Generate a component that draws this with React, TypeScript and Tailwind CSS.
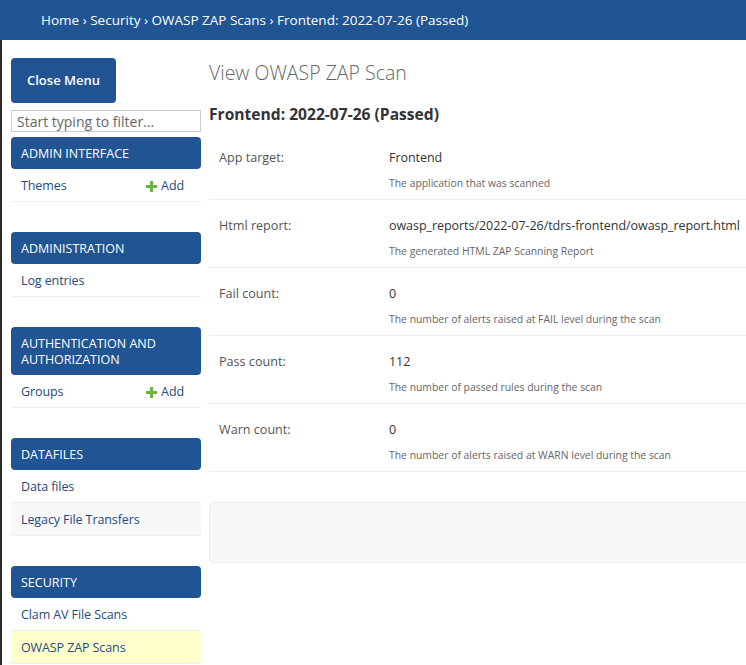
import React from "react";

const F = { fontFamily: '"Open Sans", "Noto Sans", Arial, sans-serif' };

function Plus() {
  return (
    <svg width="11" height="11" viewBox="0 0 11 11" className="mr-[4px]">
      <rect x="4" y="0" width="3" height="11" fill="#6cb33f" />
      <rect x="0" y="4" width="11" height="3" fill="#6cb33f" />
    </svg>
  );
}

type Item = { name: string; add?: boolean; bg?: string };
type Mod = { title: string[]; items: Item[] };

const modules: Mod[] = [
  { title: ["ADMIN INTERFACE"], items: [{ name: "Themes", add: true }] },
  { title: ["ADMINISTRATION"], items: [{ name: "Log entries" }] },
  { title: ["AUTHENTICATION AND", "AUTHORIZATION"], items: [{ name: "Groups", add: true }] },
  {
    title: ["DATAFILES"],
    items: [{ name: "Data files" }, { name: "Legacy File Transfers", bg: "bg-[#f8f8f8]" }],
  },
  {
    title: ["SECURITY"],
    items: [{ name: "Clam AV File Scans" }, { name: "OWASP ZAP Scans", bg: "bg-[#ffffcc]" }],
  },
];

const fields = [
  { label: "App target:", value: "Frontend", help: "The application that was scanned" },
  {
    label: "Html report:",
    value: "owasp_reports/2022-07-26/tdrs-frontend/owasp_report.html",
    help: "The generated HTML ZAP Scanning Report",
  },
  { label: "Fail count:", value: "0", help: "The number of alerts raised at FAIL level during the scan" },
  { label: "Pass count:", value: "112", help: "The number of passed rules during the scan" },
  { label: "Warn count:", value: "0", help: "The number of alerts raised at WARN level during the scan" },
];

export default function App() {
  return (
    <div className="w-[746px] h-[665px] overflow-hidden bg-white" style={F}>
      <div className="h-[40px] bg-[#205493] flex items-center pl-[41px] text-white text-[13.5px]">
        Home › Security › OWASP ZAP Scans › Frontend: 2022-07-26 (Passed)
      </div>
      <div className="flex h-[625px] border-l-2 border-[#2b2b2b]">
        <div className="w-[190px] ml-[9px] shrink-0 pt-[18px]">
          <div className="w-[105px] h-[45px] rounded-[4px] bg-[#205493] text-white text-[13px] font-semibold flex items-center justify-center pt-[1px]">
            Close Menu
          </div>
          <div className="mt-[7px] h-[22px] border border-[#cccccc] text-[14px] text-[#666] flex items-center pl-[5px]">
            Start typing to filter...
          </div>
          <div className="mt-[5px] flex flex-col gap-[30px]">
            {modules.map((m) => (
              <div key={m.title[0]}>
                <div className="bg-[#205493] rounded-[4px] text-white text-[12.5px] leading-[16px] px-[10px] pt-[9px] pb-[7px]">
                  {m.title.map((t) => (
                    <div key={t}>{t}</div>
                  ))}
                </div>
                {m.items.map((it) => (
                  <div
                    key={it.name}
                    className={`h-[33px] border-b border-[#eeeeee] flex items-center justify-between pl-[10px] pr-[17px] pt-[2px] text-[12.5px] tracking-[-0.1px] text-[#264a80] ${it.bg ?? ""}`}
                  >
                    <span>{it.name}</span>
                    {it.add && (
                      <span className="flex items-center">
                        <Plus />
                        Add
                      </span>
                    )}
                  </div>
                ))}
              </div>
            ))}
          </div>
        </div>
        <div className="ml-[8px] w-[600px] shrink-0">
          <div className="pt-[19px] text-[19.5px] font-light text-[#666] leading-[28px]">View OWASP ZAP Scan</div>
          <div className="mt-[17px] text-[15.6px] font-bold text-[#333] leading-[20px]">Frontend: 2022-07-26 (Passed)</div>
          <div className="mt-[8px]">
            {fields.map((f) => (
              <div key={f.label} className="h-[68px] border-b border-[#eeeeee] flex pl-[10px] pt-[17px]">
                <div className="w-[170px] text-[12.6px] text-[#555]">{f.label}</div>
                <div>
                  <div className="text-[12.5px] tracking-[-0.05px] text-[#333] leading-[18px]">{f.value}</div>
                  <div className="mt-[9px] text-[10.4px] text-[#666] leading-[15px]">{f.help}</div>
                </div>
              </div>
            ))}
          </div>
          <div className="mt-[30px] h-[61px] bg-[#f8f8f8] border border-[#eeeeee] rounded-[4px]" />
        </div>
      </div>
    </div>
  );
}
